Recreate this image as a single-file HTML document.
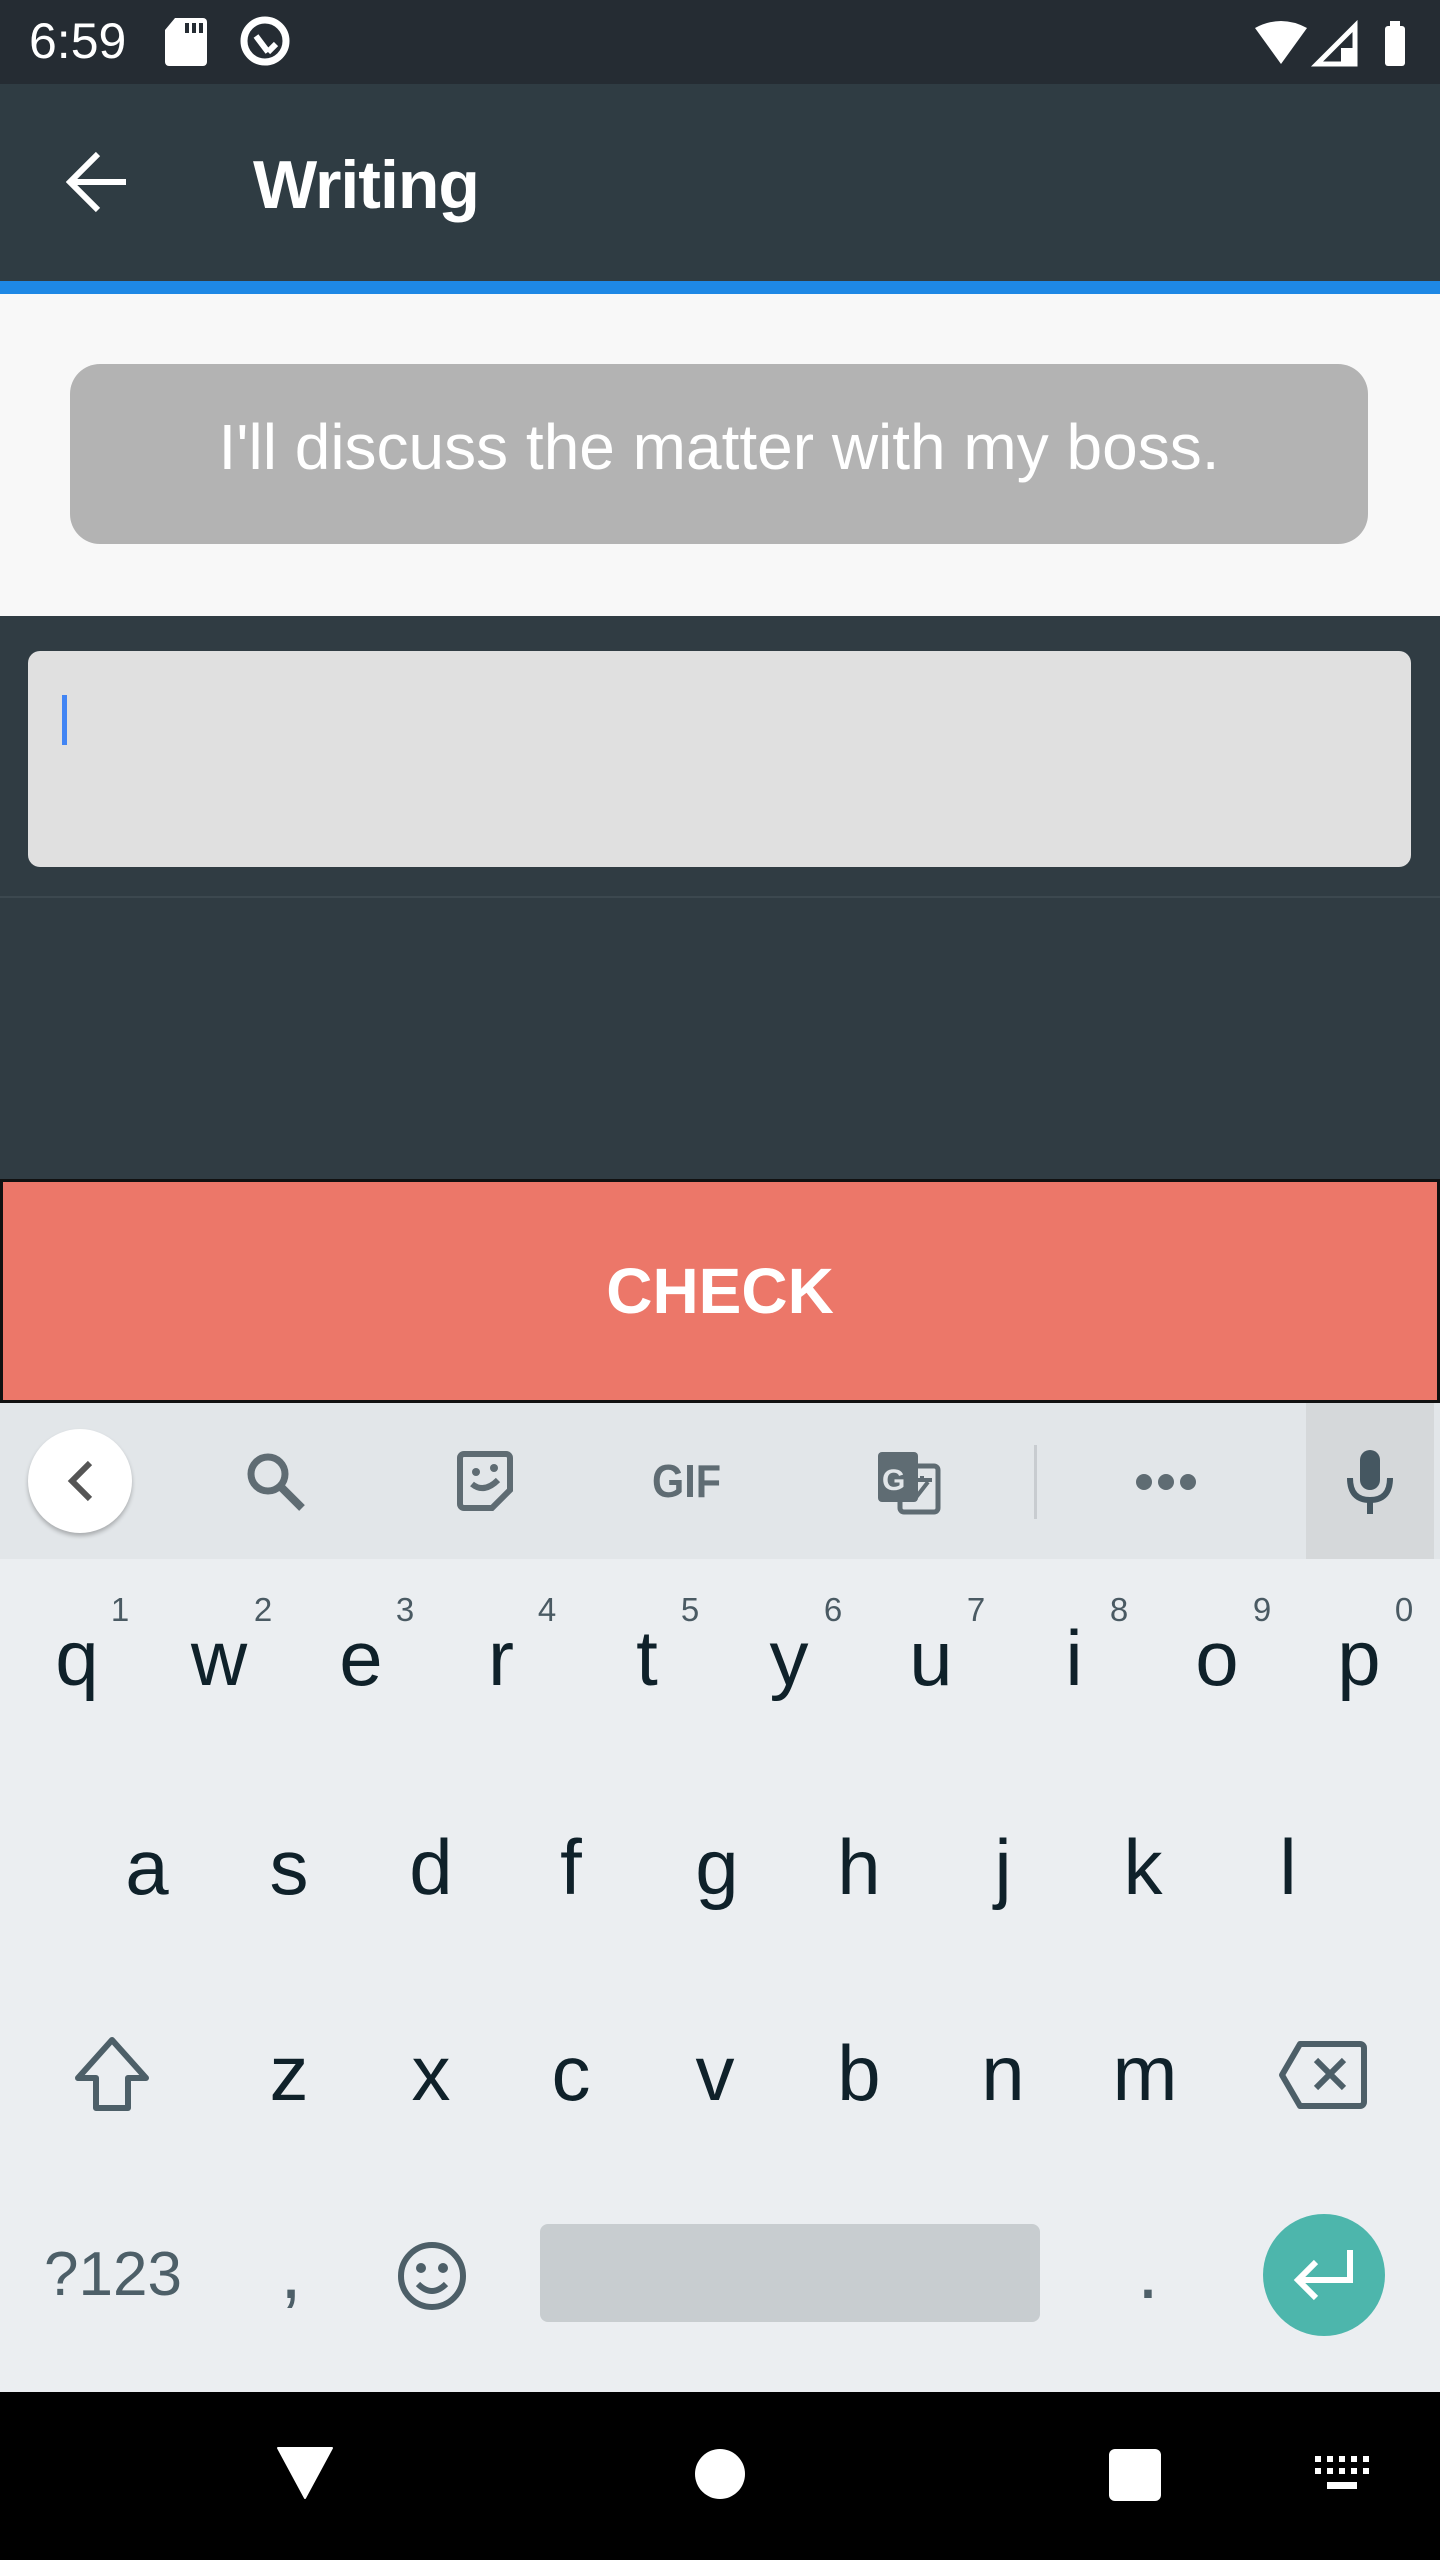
<!DOCTYPE html>
<html><head><meta charset="utf-8"><style>
*{margin:0;padding:0;box-sizing:border-box}
body{width:1440px;height:2560px;position:relative;overflow:hidden;font-family:"Liberation Sans",sans-serif;background:#303c43}
.a{position:absolute}
.k{position:absolute;width:120px;text-align:center;font-size:78px;line-height:78px;color:#0f212a}
.n{position:absolute;width:60px;text-align:center;font-size:33px;line-height:33px;color:#4a5a63}
</style></head><body>
<div class="a" style="left:0;top:0;width:1440px;height:84px;background:#252c33"></div>
<div class="a" style="left:29px;top:16px;font-size:50px;line-height:50px;color:#fff">6:59</div>
<svg class="a" style="left:165px;top:18px" width="42" height="48" viewBox="0 0 42 48"><path d="M10 0H38a4 4 0 0 1 4 4V44a4 4 0 0 1-4 4H4a4 4 0 0 1-4-4V12Z" fill="#fff"/><rect x="20" y="5" width="4" height="10" fill="#252c33"/><rect x="27" y="5" width="4" height="10" fill="#252c33"/><rect x="34" y="5" width="4" height="10" fill="#252c33"/></svg>
<svg class="a" style="left:238px;top:14px" width="54" height="56" viewBox="0 0 54 56"><circle cx="27" cy="27" r="21" fill="none" stroke="#fff" stroke-width="7"/><path d="M18 22L30 38M30 38L38 30" fill="none" stroke="#fff" stroke-width="6"/></svg>
<svg class="a" style="left:1255px;top:20px" width="150" height="48" viewBox="0 0 150 48"><path d="M0 8Q26-6 52 8L26 44Z" fill="#fff"/><path d="M62 44L100 6V44Z" fill="none" stroke="#fff" stroke-width="5"/><path d="M86 28V44H100V28Z" fill="#fff"/><rect x="130" y="6" width="20" height="40" rx="3" fill="#fff"/><rect x="135" y="1" width="10" height="6" fill="#fff"/></svg>
<div class="a" style="left:0;top:84px;width:1440px;height:197px;background:#2f3c43"></div>
<svg class="a" style="left:66px;top:150px" width="62" height="64" viewBox="0 0 62 64"><path d="M60 32H6M32 4L4 32L32 60" fill="none" stroke="#fff" stroke-width="6"/></svg>
<div class="a" style="left:253px;top:145px;font-size:68px;line-height:80px;color:#fff;font-weight:bold;letter-spacing:-1px">Writing</div>
<div class="a" style="left:0;top:281px;width:1440px;height:13px;background:#1e88e5"></div>
<div class="a" style="left:0;top:294px;width:1440px;height:322px;background:#f8f8f8"></div>
<div class="a" style="left:70px;top:364px;width:1298px;height:180px;background:#b3b3b3;border-radius:30px"></div>
<div class="a" style="left:70px;top:364px;width:1298px;color:#fff;font-size:64px;text-align:center;line-height:166px">I'll discuss the matter with my boss.</div>
<div class="a" style="left:28px;top:651px;width:1383px;height:216px;background:#e0e0e0;border-radius:12px"></div>
<div class="a" style="left:62px;top:695px;width:5px;height:50px;background:#4285f4"></div>
<div class="a" style="left:0;top:896px;width:1440px;height:2px;background:#3c484f"></div>
<div class="a" style="left:0;top:1179px;width:1440px;height:224px;background:#ec7769;border:3px solid #111;color:#fff;font-weight:bold;font-size:64px;text-align:center;line-height:218px">CHECK</div>
<div class="a" style="left:0;top:1403px;width:1440px;height:989px;background:#ebeef1"></div>
<div class="a" style="left:0;top:1403px;width:1440px;height:156px;background:#e2e6e9"></div>
<div class="a" style="left:1306px;top:1403px;width:128px;height:156px;background:#d5d8da"></div>
<div class="a" style="left:28px;top:1429px;width:104px;height:104px;border-radius:50%;background:#fff;box-shadow:0 3px 4px rgba(0,0,0,.25)"></div>
<svg class="a" style="left:62px;top:1459px" width="36" height="44" viewBox="0 0 36 44"><path d="M28 4L10 22L28 40" fill="none" stroke="#555" stroke-width="6"/></svg>
<svg class="a" style="left:244px;top:1450px" width="64" height="64" viewBox="0 0 64 64"><circle cx="24" cy="24" r="17" fill="none" stroke="#5f6c73" stroke-width="7"/><path d="M36 36L58 58" stroke="#5f6c73" stroke-width="8"/></svg>
<svg class="a" style="left:456px;top:1450px" width="58" height="62" viewBox="0 0 58 62"><path d="M8 4H50a4 4 0 0 1 4 4V40L36 58H8a4 4 0 0 1-4-4V8a4 4 0 0 1 4-4Z" fill="none" stroke="#5f6c73" stroke-width="6"/><circle cx="20" cy="22" r="4" fill="#5f6c73"/><circle cx="38" cy="18" r="4" fill="#5f6c73"/><path d="M16 34Q28 44 42 30" fill="none" stroke="#5f6c73" stroke-width="6"/></svg>
<div class="a" style="left:652px;top:1456px;font-size:46px;font-weight:bold;color:#5f6c73;line-height:50px;transform:scaleX(0.9);transform-origin:left">GIF</div>
<svg class="a" style="left:876px;top:1450px" width="66" height="66" viewBox="0 0 66 66"><rect x="2" y="2" width="40" height="50" rx="4" fill="#5f6c73"/><rect x="24" y="16" width="38" height="46" rx="4" fill="none" stroke="#5f6c73" stroke-width="5"/><text x="6" y="40" font-size="30" font-weight="bold" fill="#e2e6e9" font-family="Liberation Sans">G</text><path d="M34 30H56M46 26V32M38 50L52 32" stroke="#5f6c73" stroke-width="4" fill="none"/></svg>
<div class="a" style="left:1034px;top:1445px;width:3px;height:74px;background:#c8ccd0"></div>
<svg class="a" style="left:1134px;top:1470px" width="64" height="24" viewBox="0 0 64 24"><circle cx="10" cy="12" r="8" fill="#5f6c73"/><circle cx="32" cy="12" r="8" fill="#5f6c73"/><circle cx="54" cy="12" r="8" fill="#5f6c73"/></svg>
<svg class="a" style="left:1346px;top:1448px" width="48" height="68" viewBox="0 0 48 68"><rect x="14" y="2" width="20" height="40" rx="10" fill="#455761"/><path d="M4 30Q4 52 24 52Q44 52 44 30M24 52V66" fill="none" stroke="#455761" stroke-width="6"/></svg>
<div class="n" style="left:90px;top:1593px">1</div><div class="n" style="left:233px;top:1593px">2</div><div class="n" style="left:375px;top:1593px">3</div><div class="n" style="left:517px;top:1593px">4</div><div class="n" style="left:660px;top:1593px">5</div><div class="n" style="left:803px;top:1593px">6</div><div class="n" style="left:946px;top:1593px">7</div><div class="n" style="left:1089px;top:1593px">8</div><div class="n" style="left:1232px;top:1593px">9</div><div class="n" style="left:1374px;top:1593px">0</div>
<div class="k" style="left:17px;top:1619px">q</div><div class="k" style="left:159px;top:1619px">w</div><div class="k" style="left:301px;top:1619px">e</div><div class="k" style="left:441px;top:1619px">r</div><div class="k" style="left:587px;top:1619px">t</div><div class="k" style="left:729px;top:1619px">y</div><div class="k" style="left:871px;top:1619px">u</div><div class="k" style="left:1014px;top:1619px">i</div><div class="k" style="left:1157px;top:1619px">o</div><div class="k" style="left:1299px;top:1619px">p</div>
<div class="k" style="left:87px;top:1828px">a</div><div class="k" style="left:229px;top:1828px">s</div><div class="k" style="left:371px;top:1828px">d</div><div class="k" style="left:511px;top:1828px">f</div><div class="k" style="left:657px;top:1828px">g</div><div class="k" style="left:799px;top:1828px">h</div><div class="k" style="left:943px;top:1828px">j</div><div class="k" style="left:1083px;top:1828px">k</div><div class="k" style="left:1228px;top:1828px">l</div>
<div class="k" style="left:229px;top:2034px">z</div><div class="k" style="left:371px;top:2034px">x</div><div class="k" style="left:511px;top:2034px">c</div><div class="k" style="left:655px;top:2034px">v</div><div class="k" style="left:799px;top:2034px">b</div><div class="k" style="left:943px;top:2034px">n</div><div class="k" style="left:1085px;top:2034px">m</div>
<svg class="a" style="left:72px;top:2036px" width="80" height="78" viewBox="0 0 80 78"><path d="M40 4L6 42H24V72H56V42H74Z" fill="none" stroke="#4d5f68" stroke-width="6" stroke-linejoin="round"/></svg>
<svg class="a" style="left:1278px;top:2040px" width="90" height="70" viewBox="0 0 90 70"><path d="M22 4H82a4 4 0 0 1 4 4V62a4 4 0 0 1-4 4H22L4 35Z" fill="none" stroke="#4d5f68" stroke-width="6" stroke-linejoin="round"/><path d="M38 20L66 48M66 20L38 48" stroke="#4d5f68" stroke-width="6"/></svg>
<div class="a" style="left:44px;top:2244px;font-size:62px;line-height:62px;color:#4d5f68">?123</div>
<div class="k" style="left:231px;top:2232px;color:#4d5f68">,</div>
<svg class="a" style="left:396px;top:2240px" width="72" height="72" viewBox="0 0 72 72"><circle cx="36" cy="36" r="31" fill="none" stroke="#4d5f68" stroke-width="6"/><circle cx="25" cy="28" r="5" fill="#4d5f68"/><circle cx="47" cy="28" r="5" fill="#4d5f68"/><path d="M22 44Q36 58 50 44" fill="none" stroke="#4d5f68" stroke-width="6"/></svg>
<div class="a" style="left:540px;top:2224px;width:500px;height:98px;background:#c8cdd0;border-radius:8px"></div>
<div class="k" style="left:1088px;top:2232px;color:#4d5f68">.</div>
<div class="a" style="left:1263px;top:2214px;width:122px;height:122px;border-radius:50%;background:#4db6ac"></div>
<svg class="a" style="left:1290px;top:2246px" width="70" height="60" viewBox="0 0 70 60"><path d="M60 4V34H10M26 16L8 34L26 52" fill="none" stroke="#fff" stroke-width="6"/></svg>
<div class="a" style="left:0;top:2392px;width:1440px;height:168px;background:#000"></div>
<svg class="a" style="left:276px;top:2446px" width="58" height="54" viewBox="0 0 58 54"><path d="M2 2H56L29 52Z" fill="#fff" stroke="#fff" stroke-width="2" stroke-linejoin="round"/></svg>
<div class="a" style="left:695px;top:2449px;width:50px;height:50px;border-radius:50%;background:#fff"></div>
<div class="a" style="left:1109px;top:2449px;width:52px;height:52px;border-radius:6px;background:#fff"></div>
<svg class="a" style="left:1315px;top:2456px" width="56" height="40" viewBox="0 0 56 40"><g fill="#fff"><rect x="0" y="0" width="6" height="6"/><rect x="12" y="0" width="6" height="6"/><rect x="24" y="0" width="6" height="6"/><rect x="36" y="0" width="6" height="6"/><rect x="48" y="0" width="6" height="6"/><rect x="0" y="12" width="6" height="6"/><rect x="12" y="12" width="6" height="6"/><rect x="24" y="12" width="6" height="6"/><rect x="36" y="12" width="6" height="6"/><rect x="48" y="12" width="6" height="6"/><rect x="12" y="26" width="30" height="7"/></g></svg>
</body></html>
